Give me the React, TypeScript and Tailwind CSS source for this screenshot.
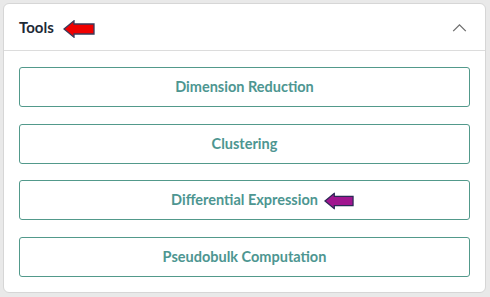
import React from 'react';

const tools = ['Dimension Reduction', 'Clustering', 'Differential Expression', 'Pseudobulk Computation'];

const LeftArrow: React.FC<{ fill: string; stroke: string; className?: string }> = ({ fill, stroke, className }) => (
  <svg viewBox="0 0 32 18" className={className}>
    <path d="M1 9 L11 0.8 L11 4 L31 4 L31 14 L11 14 L11 17.2 Z" fill={fill} stroke={stroke} strokeWidth="1.3" strokeLinejoin="miter" />
  </svg>
);

const App: React.FC = () => {
  return (
    <div className="w-[490px] h-[297px] bg-[#e9e9e9] p-[3px] pb-[4px] pr-[4px]" style={{ fontFamily: 'Lato, "Liberation Sans", sans-serif' }}>
      <div className="h-full bg-white rounded-md border border-[#d6d6d6] flex flex-col">
        {/* Header */}
        <div className="h-[47px] border-b border-[#dcdcdc] flex items-center justify-between pl-[15px] pr-[18px]">
          <div className="flex items-center gap-[9px]">
            <span className="text-[15px] font-bold text-[#1e2a36]">Tools</span>
            <LeftArrow fill="#f00000" stroke="#3a3a5a" className="w-[32px] h-[18px] mt-[4px] shrink-0" />
          </div>
          <svg viewBox="0 0 16 10" className="w-[15px] h-[9px]">
            <path d="M1 9 L8 2 L15 9" fill="none" stroke="#6b6b6b" strokeWidth="1.4" />
          </svg>
        </div>

        {/* Buttons */}
        <div className="flex flex-col gap-[16.5px] px-[15px] pt-[16px]">
          {tools.map((t) => (
            <button
              key={t}
              className="h-[40px] w-full border border-[#52998b] rounded-[3px] flex items-center justify-center text-[14.5px] font-bold text-[#4d9691] bg-white"
            >
              <span className="relative">
                {t}
                {t === 'Differential Expression' && (
                  <LeftArrow
                    fill="#a0158f"
                    stroke="#2a2a55"
                    className="absolute left-full top-1/2 -translate-y-1/2 ml-[6px] mt-[1px] w-[30px] h-[17px]"
                  />
                )}
              </span>
            </button>
          ))}
        </div>
      </div>
    </div>
  );
};

export default App;
